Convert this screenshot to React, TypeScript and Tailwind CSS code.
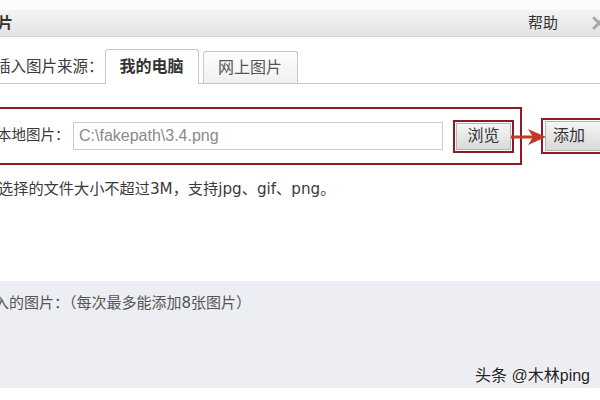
import React from "react";

const cjk = "font-[Liberation_Sans,Noto_Sans_CJK_SC,sans-serif]";
const wide = "font-[DejaVu_Sans,Noto_Sans_CJK_SC,sans-serif]";

function CloseIcon() {
  return (
    <svg width="14" height="14" viewBox="0 0 14 14" className="shrink-0">
      <path d="M2 2 L12 12 M12 2 L2 12" stroke="#a8a8a8" strokeWidth="3" strokeLinecap="round" />
    </svg>
  );
}

function Arrow() {
  return (
    <svg width="36" height="18" viewBox="0 0 36 18">
      <path d="M0 9 H24" stroke="#c0392b" strokeWidth="3" />
      <path d="M17 1 L35 9 L17 17 L22 9 Z" fill="#c0392b" />
    </svg>
  );
}

export default function App() {
  return (
    <div className={`relative h-[400px] w-[600px] overflow-hidden bg-white text-[#333] ${cjk}`}>
      {/* dialog title bar */}
      <div className="h-[10px] bg-[#fbfbfb]" />
      <div className="flex h-[27px] items-center border-b border-[#d6d6d6] bg-gradient-to-b from-[#f4f4f4] to-[#e3e3e3]">
        <span className="-ml-[47px] text-[15px] font-bold whitespace-nowrap">插入图片</span>
        <span className="ml-auto text-[15px] text-[#333]">帮助</span>
        <span className="ml-[34px] -mr-[6px]">
          <CloseIcon />
        </span>
      </div>

      {/* source tabs */}
      <div className="flex items-end border-b border-[#c8c8c8] pt-[12px]">
        <span className="-ml-[5px] self-center pt-[2px] text-[15.5px] text-[#3a3a3a] whitespace-nowrap">插入图片来源：</span>
        <div className="-mb-px ml-[1px] flex h-[35px] w-[94px] items-center justify-center rounded-t-[3px] border border-b-0 border-[#c8c8c8] bg-white text-[16px] font-bold text-[#333]">
          我的电脑
        </div>
        <div className="ml-[4px] flex h-[32px] w-[95px] items-center justify-center rounded-t-[3px] border border-b-0 border-[#c8c8c8] bg-gradient-to-b from-[#fdfdfd] to-[#f0f0f0] text-[16px] text-[#555]">
          网上图片
        </div>
      </div>

      {/* local file row */}
      <div className="relative mt-[23px] flex items-center">
        <div className="-ml-[6px] flex h-[58px] items-center border-2 border-[#8e1b24] pr-[6px]">
          <span className="w-[77px] pl-[1px] text-[14.5px] text-[#3a3a3a] whitespace-nowrap">本地图片：</span>
          <div className="flex h-[28px] w-[370px] items-center border border-[#cacaca] bg-white pl-[5px] font-[Liberation_Sans,sans-serif] text-[16px] text-[#8a8a8a]">
            C:\fakepath\3.4.png
          </div>
          <div className="ml-[10px] flex h-[33px] w-[61px] items-center border-2 border-[#8e1b24] p-[1px]">
            <div className="flex h-full w-full items-center justify-center border border-[#b5b5b5] bg-gradient-to-b from-[#f6f6f6] to-[#d9d9d9] text-[16px] text-[#333]">
              浏览
            </div>
          </div>
        </div>
        <div className="ml-[19px] flex h-[36px] w-[80px] shrink-0 items-center border-2 border-[#8e1b24] py-[1px] pl-[2px]">
          <div className="flex h-full w-full items-center border border-[#b5b5b5] bg-gradient-to-b from-[#f6f6f6] to-[#d9d9d9] pl-[7px] text-[16px] text-[#333]">
            添加
          </div>
        </div>
        <div className="absolute left-[511px] top-[21px]">
          <Arrow />
        </div>
      </div>

      {/* hint */}
      <p className={`-ml-[2px] mt-[14px] h-[20px] text-[15.2px] leading-[20px] text-[#3a3a3a] whitespace-nowrap ${wide}`}>
        选择的文件大小不超过3M，支持jpg、gif、png。
      </p>

      {/* added images panel */}
      <div className="mt-[82px] h-[107px] bg-[#eceef3] pt-[12px]">
        <p className={`-ml-[21px] text-[15px] leading-[20px] text-[#555] whitespace-nowrap ${wide}`}>
          插入的图片：（每次最多能添加8张图片）
        </p>
      </div>

      {/* watermark */}
      <span className="absolute bottom-[12px] right-[10px] text-[16px] text-[#222] [text-shadow:0_0_2px_#fff,0_0_2px_#fff]">
        头条 @木林ping
      </span>
    </div>
  );
}
